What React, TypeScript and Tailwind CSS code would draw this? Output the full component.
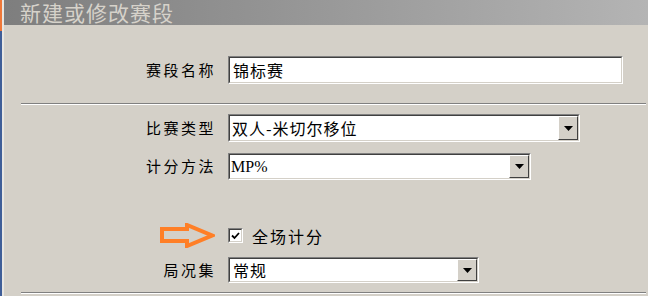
import React from "react";

const cjk = { fontFamily: '"Noto Sans CJK SC", "Noto Sans", sans-serif' };

function Sunken({ className, children }: { className: string; children?: React.ReactNode }) {
  return (
    <div className={`border-t border-l border-t-[#808080] border-l-[#808080] border-b border-r border-b-white border-r-white ${className}`}>
      <div className="h-full w-full border-t border-l border-t-[#404040] border-l-[#404040] border-b border-r border-b-[#d4d0c8] border-r-[#d4d0c8] bg-white flex items-center">
        {children}
      </div>
    </div>
  );
}

function DropButton() {
  return (
    <div className="h-full w-[20px] ml-auto bg-[#d4d0c8] border-t border-l border-t-white border-l-white border-b border-r border-b-[#404040] border-r-[#404040] flex items-center justify-center">
      <svg width="9" height="5" viewBox="0 0 9 5">
        <path d="M0 0 H9 L4.5 5 Z" fill="#000" />
      </svg>
    </div>
  );
}

function Label({ text }: { text: string }) {
  return (
    <div className="w-[212px] text-right text-[15px] tracking-[2.5px] text-black" style={cjk}>
      {text}
    </div>
  );
}

function Separator() {
  return <div className="ml-[17px] mr-[2px] h-[2px] border-t border-t-[#808080] border-b border-b-white" />;
}

export default function App() {
  return (
    <div className="w-[648px] h-[296px] flex overflow-hidden bg-[#d4d0c8]">
      <div className="w-[2px] flex flex-col">
        <div className="h-[31px] bg-[#f07838]" />
        <div className="flex-1 bg-[#3f5e98]" />
      </div>
      <div className="w-[2px] bg-[#e8e6e2]" />
      <div className="flex-1 flex flex-col">
        <div
          className="h-[25px] pl-[16px] flex items-center bg-gradient-to-r from-[#7e7e7e] to-[#b4b4b4] text-[21px] leading-[25px] tracking-[1px] text-[#d6d2ca]"
          style={cjk}
        >
          新建或修改赛段
        </div>

        <div className="flex items-center mt-[31px] gap-[12px]">
          <Label text="赛段名称" />
          <Sunken className="w-[395px] h-[28px]">
            <span className="pl-[3px] text-[16px] tracking-[1px] text-black" style={cjk}>锦标赛</span>
          </Sunken>
        </div>

        <div className="mt-[19px]">
          <Separator />
        </div>

        <div className="flex items-center mt-[9px] gap-[12px]">
          <Label text="比赛类型" />
          <Sunken className="w-[352px] h-[28px]">
            <span className="pl-[2px] text-[16px] tracking-[1px] text-black" style={cjk}>双人-米切尔移位</span>
            <DropButton />
          </Sunken>
        </div>

        <div className="flex items-center mt-[11px] gap-[12px]">
          <Label text="计分方法" />
          <Sunken className="w-[303px] h-[27px]">
            <span className="pl-[1px] text-[16px] text-black" style={{ fontFamily: '"Liberation Serif", serif' }}>MP%</span>
            <DropButton />
          </Sunken>
        </div>

        <div className="flex items-center h-[25px] mt-[43px] gap-[12px]">
          <div className="w-[212px] flex justify-end pr-[1px]">
            <svg width="55" height="25" viewBox="0 0 55 25">
              <path d="M2 6 H27 V2 L52 12.5 L27 23 V18 H2 Z" fill="none" stroke="#ff7f27" strokeWidth="4" strokeLinejoin="miter" />
            </svg>
          </div>
          <div className="flex items-center">
            <div className="w-[15px] h-[15px] border-t border-l border-t-[#808080] border-l-[#808080] border-b border-r border-b-white border-r-white">
              <div className="w-full h-full border-t border-l border-t-[#404040] border-l-[#404040] border-b border-r border-b-[#d4d0c8] border-r-[#d4d0c8] bg-white flex items-center justify-center">
                <svg width="9" height="8" viewBox="0 0 9 8">
                  <path d="M1 3.5 L3.5 6 L8 1" fill="none" stroke="#000" strokeWidth="1.8" />
                </svg>
              </div>
            </div>
            <span className="ml-[9px] text-[16px] leading-[20px] tracking-[2px] text-black" style={cjk}>全场计分</span>
          </div>
        </div>

        <div className="flex items-center mt-[9px] gap-[12px]">
          <Label text="局况集" />
          <Sunken className="w-[251px] h-[26px]">
            <span className="pl-[3px] text-[16px] tracking-[1px] text-black" style={cjk}>常规</span>
            <DropButton />
          </Sunken>
        </div>

        <div className="mt-[9px]">
          <Separator />
        </div>
      </div>
    </div>
  );
}
